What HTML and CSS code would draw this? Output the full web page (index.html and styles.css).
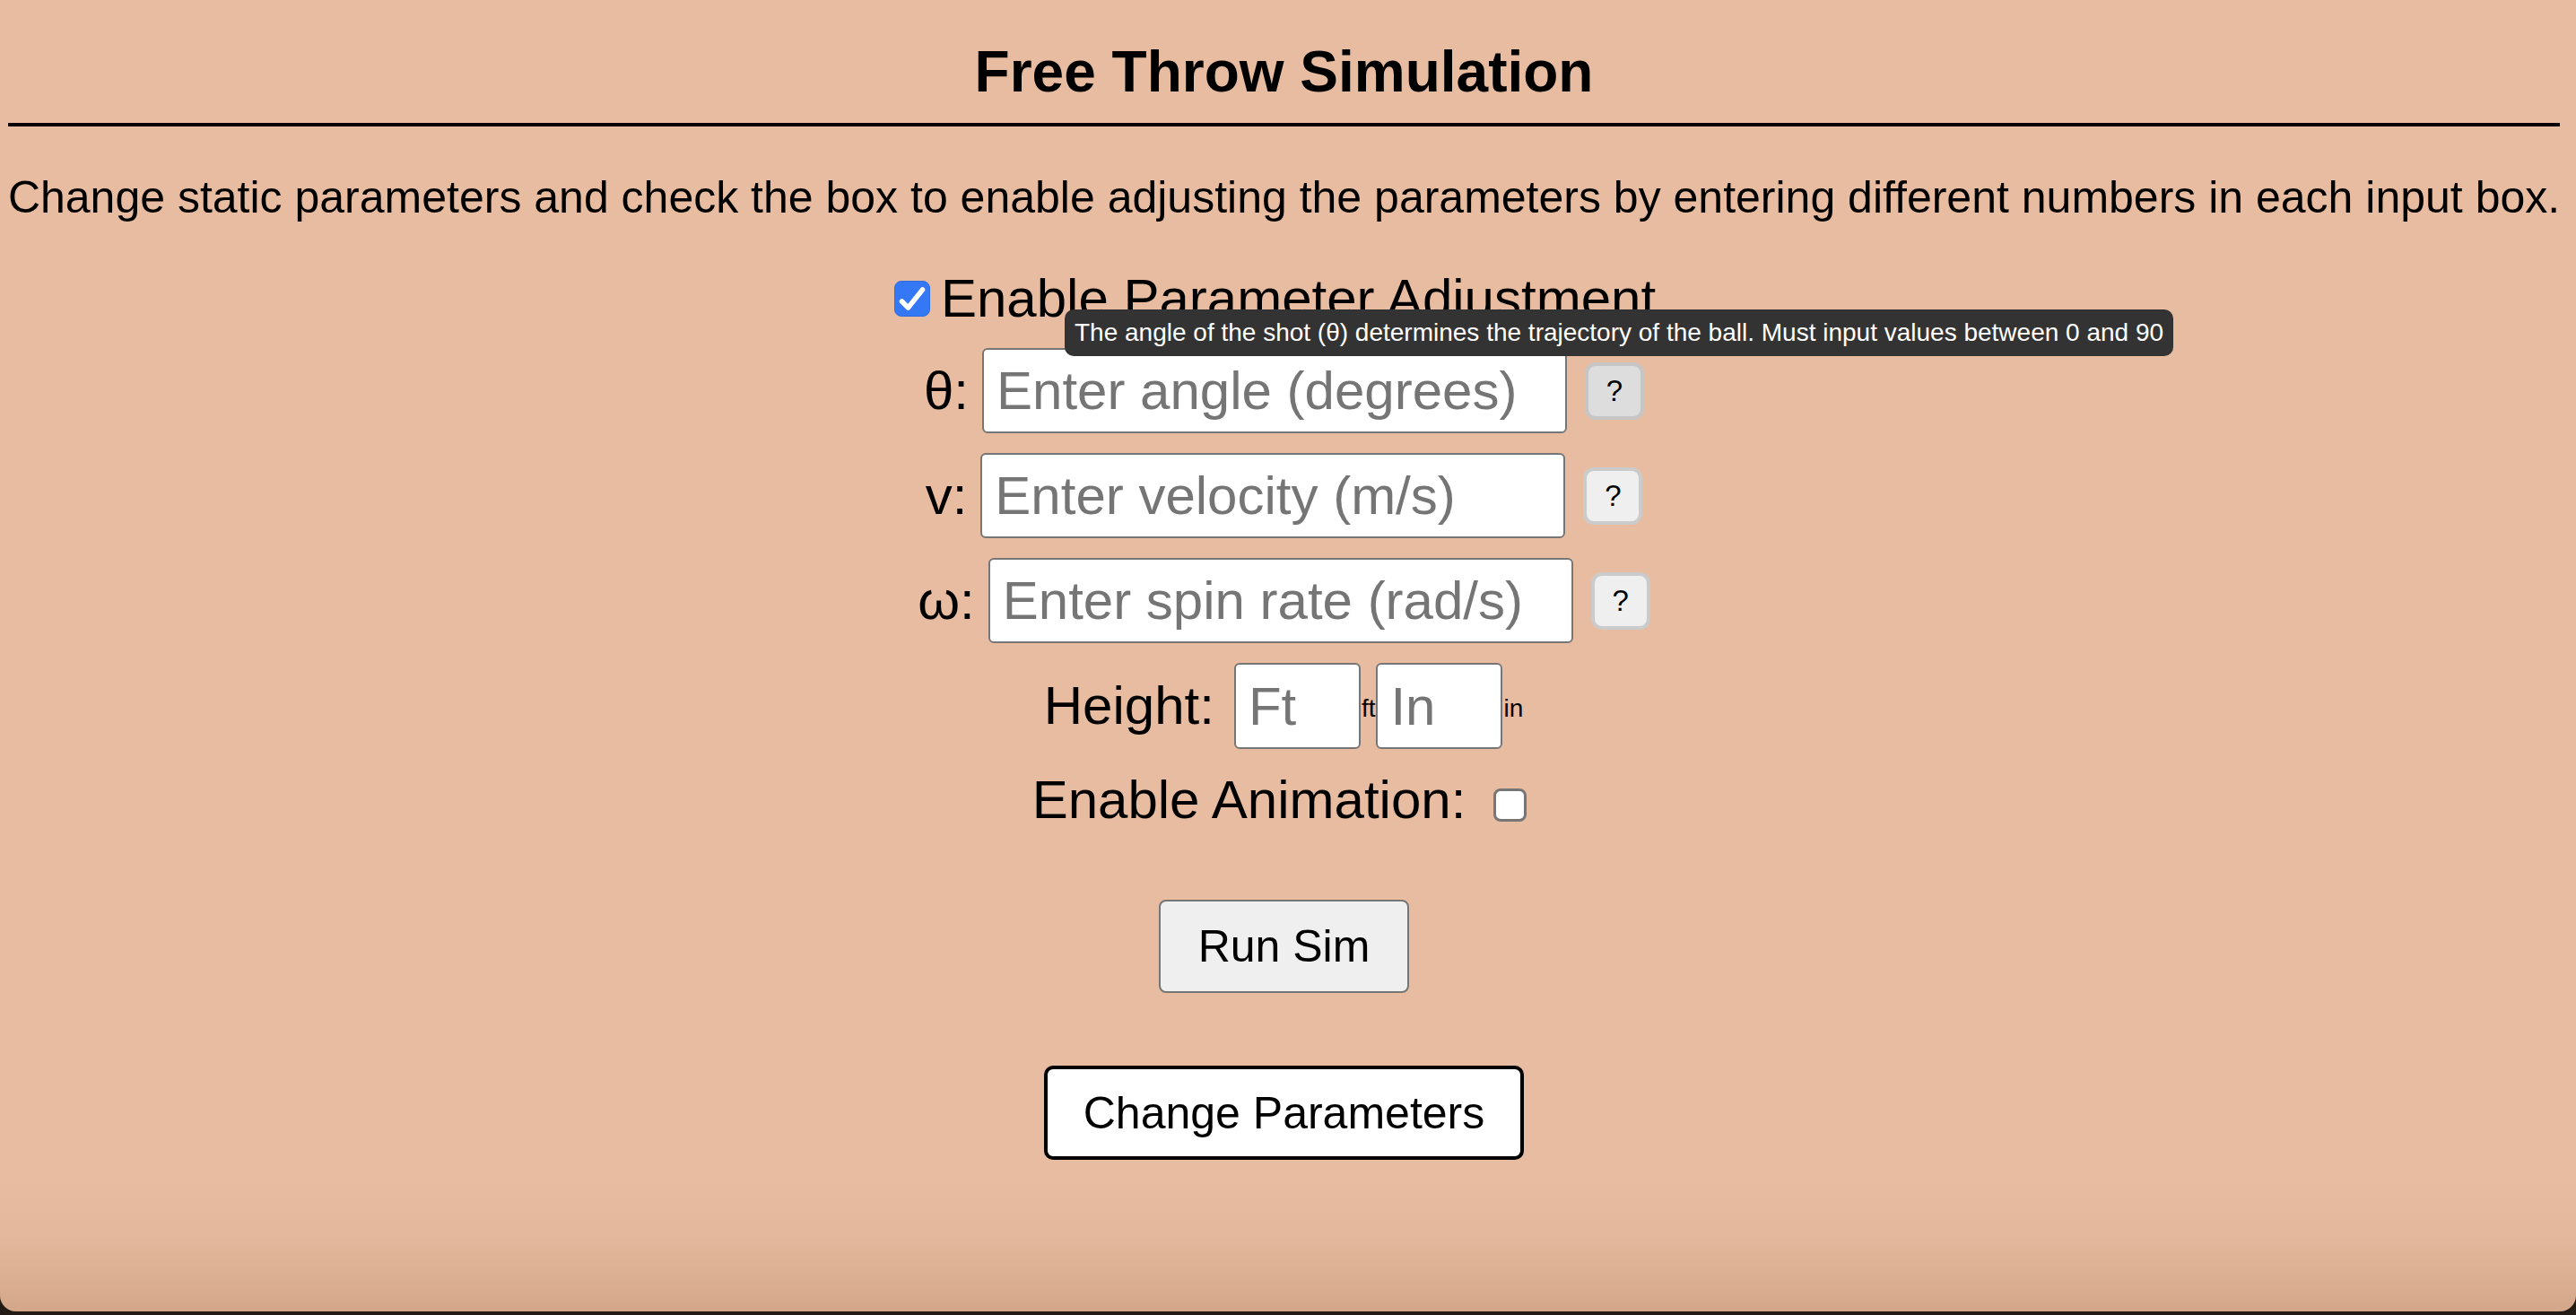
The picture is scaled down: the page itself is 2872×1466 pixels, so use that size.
FILE: index.html
```html
<!DOCTYPE html>
<html lang="en">
<head>
<meta charset="utf-8">
<title>Free Throw Simulation</title>
<link rel="stylesheet" href="styles.css">
</head>
<body>
<main class="page">
  <h1 class="title">Free Throw Simulation</h1>
  <hr class="rule">
  <p class="intro">Change static parameters and check the box to enable adjusting the parameters by entering different numbers in each input box.</p>

  <div class="row enable-row">
    <label class="check">
      <input type="checkbox" class="check-input" checked>
      <svg class="tick" viewBox="0 0 40 40" aria-hidden="true"><path d="M8.5 23 L15.5 30 L31.5 10"/></svg>
    </label>
    <span class="label">Enable Parameter Adjustment</span>
  </div>

  <div class="row param-row">
    <label class="label sym" for="theta">θ:</label>
    <input id="theta" class="field wide" type="text" placeholder="Enter angle (degrees)">
    <button class="help is-hover" type="button">?</button>
  </div>

  <div class="row param-row">
    <label class="label sym" for="vel">v:</label>
    <input id="vel" class="field wide" type="text" placeholder="Enter velocity (m/s)">
    <button class="help" type="button">?</button>
  </div>

  <div class="row param-row">
    <label class="label sym" for="spin">ω:</label>
    <input id="spin" class="field wide" type="text" placeholder="Enter spin rate (rad/s)">
    <button class="help" type="button">?</button>
  </div>

  <div class="row height-row">
    <span class="label height-label">Height:</span>
    <input class="field short" type="text" placeholder="Ft"><span class="unit">ft</span><input class="field short" type="text" placeholder="In"><span class="unit">in</span>
  </div>

  <div class="row anim-row">
    <label class="label" for="anim">Enable Animation:</label>
    <input id="anim" type="checkbox" class="plain-check">
  </div>

  <button class="run-btn" type="button">Run Sim</button>
  <button class="change-btn" type="button">Change Parameters</button>
</main>

<div class="tooltip">The angle of the shot (θ) determines the trajectory of the ball. Must input values between 0 and 90</div>
<div class="shade" aria-hidden="true"></div>
</body>
</html>
```

FILE: styles.css
```css
* {
  box-sizing: border-box;
}

html {
  background: #231c16;
  height: 100%;
}

body {
  margin: 0;
  height: 1462px;
  background: #e8bca0;
  border-radius: 0 0 18px 18px;
  position: relative;
  overflow: hidden;
  font-family: "Liberation Sans", Arial, Helvetica, sans-serif;
  color: #000;
}

.page {
  padding: 0 18px 0 9px;
  display: flex;
  flex-direction: column;
  align-items: center;
}

.title {
  margin: 43px 0 0;
  font-size: 64px;
  line-height: 74px;
  font-weight: bold;
}

.rule {
  align-self: stretch;
  margin: 20px 0 0;
  border: 0;
  border-top: 4px solid #000;
  height: 0;
}

.intro {
  margin: 51px 0 0;
  font-size: 50px;
  line-height: 56px;
  text-align: center;
  white-space: nowrap;
}

.row {
  display: flex;
  align-items: center;
  justify-content: center;
}

.label {
  font-size: 60px;
  line-height: 66px;
}

.enable-row {
  margin-top: 52px;
  height: 66px;
  padding-right: 20px;
}

.check {
  display: grid;
  width: 40px;
  height: 40px;
  margin-right: 12px;
}

.check-input {
  grid-area: 1 / 1;
  appearance: none;
  -webkit-appearance: none;
  margin: 0;
  width: 40px;
  height: 40px;
  border-radius: 8px;
  background: #3478f6;
  border: 1px solid #2f6ee0;
}

.tick {
  grid-area: 1 / 1;
  width: 40px;
  height: 40px;
  pointer-events: none;
  fill: none;
  stroke: #fff;
  stroke-width: 5.5;
  stroke-linecap: round;
  stroke-linejoin: round;
}

.param-row {
  margin-top: 22px;
  height: 95px;
}

.sym {
  margin-right: 15px;
}

.field {
  height: 95px;
  border: 2px solid #767676;
  border-radius: 6px;
  background: #fff;
  padding: 0 14px;
  margin: 0;
  font-family: "Liberation Sans", Arial, Helvetica, sans-serif;
  font-size: 60px;
  color: #000;
}

.field::placeholder {
  color: #757575;
  opacity: 1;
}

.wide {
  width: 652px;
}

.help {
  margin-left: 20px;
  width: 66px;
  height: 64px;
  padding: 0;
  background: #efefef;
  border: 4px solid #cbcbcb;
  border-radius: 12px;
  font-family: "Liberation Sans", Arial, Helvetica, sans-serif;
  font-size: 33px;
  color: #000;
}

.help.is-hover {
  background: #dddddd;
  border-color: #c6c6c6;
}

.height-row {
  margin-top: 22px;
  height: 96px;
}

.height-label {
  margin-right: 22px;
}

.short {
  width: 141px;
  height: 96px;
}

.unit {
  font-size: 28px;
  line-height: 28px;
  margin-top: 6px;
  padding: 0 1px;
}

.anim-row {
  margin-top: 24px;
  height: 66px;
  padding-right: 10px;
}

.plain-check {
  appearance: none;
  -webkit-appearance: none;
  margin: 11px 0 0 31px;
  width: 37px;
  height: 37px;
  border: 3px solid #767676;
  border-radius: 8px;
  background: #fff;
}

.run-btn {
  margin-top: 78px;
  width: 279px;
  height: 104px;
  padding: 0;
  background: #efefef;
  border: 2px solid #767676;
  border-radius: 8px;
  font-family: "Liberation Sans", Arial, Helvetica, sans-serif;
  font-size: 50px;
  color: #000;
}

.change-btn {
  margin-top: 81px;
  width: 535px;
  height: 105px;
  padding: 0;
  background: #fff;
  border: 4px solid #000;
  border-radius: 10px;
  font-family: "Liberation Sans", Arial, Helvetica, sans-serif;
  font-size: 50px;
  color: #000;
}

.tooltip {
  position: absolute;
  left: 1187px;
  top: 345px;
  height: 52px;
  padding: 0 11px;
  background: #333;
  color: #fff;
  border-radius: 10px;
  font-size: 28px;
  line-height: 52px;
  white-space: nowrap;
}

.shade {
  position: absolute;
  left: 0;
  right: 0;
  bottom: 0;
  height: 150px;
  pointer-events: none;
  border-radius: 0 0 18px 18px;
  background: linear-gradient(to bottom, rgba(110, 60, 30, 0) 0%, rgba(110, 60, 30, 0.04) 45%, rgba(110, 60, 30, 0.1) 75%, rgba(110, 60, 30, 0.17) 100%);
}
```
